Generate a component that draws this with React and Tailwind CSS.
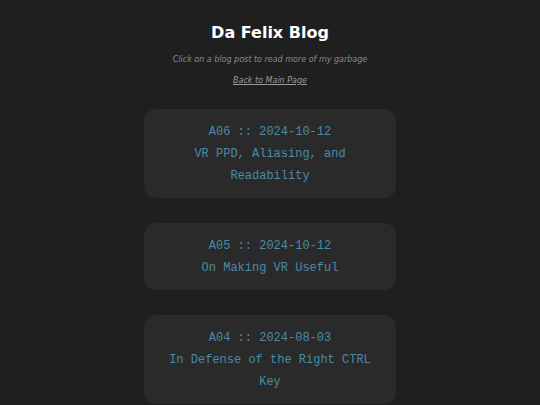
import React from "react";

const posts = [
    { id: "A06", date: "2024-10-12", title: "VR PPD, Aliasing, and Readability" },
    { id: "A05", date: "2024-10-12", title: "On Making VR Useful" },
    { id: "A04", date: "2024-08-03", title: "In Defense of the Right CTRL Key" },
];

const App = () => {
    return (
        <div className="min-h-screen bg-[#1f1f1f] flex flex-col items-center pt-[23px] font-['DejaVu_Sans',sans-serif]">
            <h1 className="text-[16px] font-bold text-white leading-[20px]">Da Felix Blog</h1>
            <p className="mt-[12px] text-[8px] italic text-[#8a8a8a] leading-[10px]">
                Click on a blog post to read more of my garbage
            </p>
            <a href="#" className="mt-[11px] text-[8px] italic text-[#9a9a9a] underline leading-[10px]">
                Back to Main Page
            </a>

            <div className="mt-[23px] flex flex-col gap-[25px]">
                {posts.map((p) => (
                    <div
                        key={p.id}
                        className="w-[252px] bg-[#2a2a2a] rounded-[12px] px-[16px] pt-[12px] pb-[11px] text-center font-['Liberation_Mono',monospace] text-[12px] leading-[22px] text-[#4a8ba5]"
                    >
                        <div>
                            {p.id} :: {p.date}
                        </div>
                        <div>{p.title}</div>
                    </div>
                ))}
            </div>
        </div>
    );
};

export default App;
